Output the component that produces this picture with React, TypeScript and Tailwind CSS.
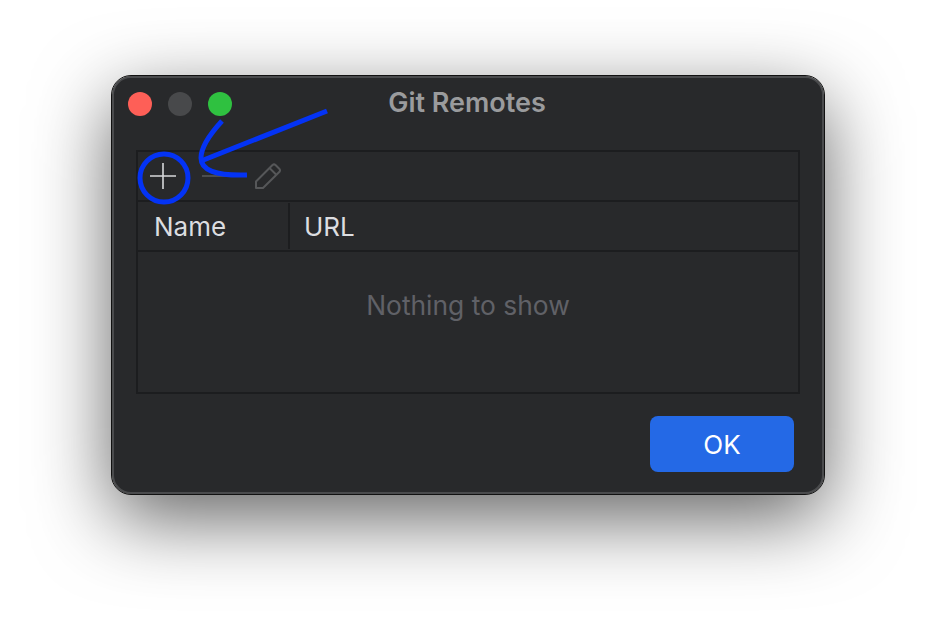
function TrafficLights() {
  return (
    <div className="absolute left-[14px] top-[14px] flex gap-4">
      <div className="w-6 h-6 rounded-full bg-[#fe5f57]" />
      <div className="w-6 h-6 rounded-full bg-[#48494b]" />
      <div className="w-6 h-6 rounded-full bg-[#2fc140]" />
    </div>
  );
}

function PlusIcon() {
  return (
    <svg width="26" height="26" viewBox="0 0 26 26" stroke="#d6d7da" strokeWidth="1.6">
      <path d="M0 13 H26 M13 0 V26" />
    </svg>
  );
}

function MinusIcon() {
  return (
    <svg width="26" height="26" viewBox="0 0 26 26" stroke="#565759" strokeWidth="1.6">
      <path d="M0 13 H26" />
    </svg>
  );
}

function PencilIcon() {
  return (
    <svg width="26" height="26" viewBox="0 0 26 26" fill="none" stroke="#565759" strokeWidth="2" strokeLinejoin="round">
      <path d="M1 25 L1 18.5 L17.5 2 Q19 0.8 20.5 2 L24.5 6 Q25.5 7.5 24.5 8.8 L8 25 Z" />
      <path d="M14.5 5 L21.5 12" />
    </svg>
  );
}

export default function App() {
  return (
    <div className="relative w-[936px] h-[642px] overflow-hidden bg-white pl-[112px] pt-[76px] font-['Inter',sans-serif]">
      {/* Window */}
      <div className="relative w-[712px] h-[418px] rounded-[19px] bg-[#28292b] border-2 border-[#4a4b4d] outline outline-1 outline-[#111] shadow-[0_24px_78px_rgba(0,0,0,0.62)] flex flex-col">
        <TrafficLights />
        <div className="h-[72px] shrink-0 pt-[9px] pr-[2px] text-center text-[27px] leading-[32px] font-semibold text-[#9a9b9d]">Git Remotes</div>

        <div className="mx-[22px] h-[244px] border-2 border-[#1c1d1f] flex flex-col">
          {/* Toolbar */}
          <div className="h-[50px] shrink-0 flex items-center pl-[12px] gap-[26px] border-b-2 border-[#1c1d1f]">
            <PlusIcon />
            <MinusIcon />
            <div className="ml-[1px]"><PencilIcon /></div>
          </div>
          {/* Header */}
          <div className="h-[50px] shrink-0 flex items-center border-b-2 border-[#1c1d1f] text-[26px] text-[#dcdde0]">
            <div className="w-[152px] h-[46px] flex items-center pl-[16px] border-r-2 border-[#1c1d1f]">Name</div>
            <div className="pl-[14px]">URL</div>
          </div>
          <div className="flex-1 flex items-center justify-center pb-[33px] text-[26.4px] text-[#606167]">Nothing to show</div>
        </div>

        <div className="flex justify-end mt-[22px] mr-[28px]">
          <button className="w-[144px] h-[56px] rounded-[8px] bg-[#2469e6] text-white text-[26px]">OK</button>
        </div>
      </div>

      {/* Blue annotations drawn on top */}
      <svg className="absolute left-0 top-0" width="936" height="642" fill="none" stroke="#0433f5" strokeWidth="5">
        <circle cx="164" cy="178" r="24" />
        <path d="M222 121 C210 134 201 147 201 158 C201 170 215 176 247 175" />
        <path d="M201 161 L327 111" />
      </svg>
    </div>
  );
}
